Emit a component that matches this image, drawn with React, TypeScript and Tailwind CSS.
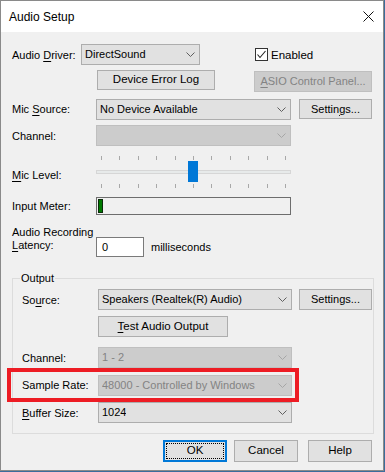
import type { ReactNode } from "react";

const font = { fontFamily: '"Liberation Sans", Arial, sans-serif' };

const Chevron = ({ disabled }: { disabled?: boolean }) => (
  <svg width="9" height="5" viewBox="0 0 9 5" className="shrink-0">
    <path
      d="M0.5 0.5 L4.5 4.5 L8.5 0.5"
      fill="none"
      stroke={disabled ? "#a6a6a6" : "#5f5f5f"}
      strokeWidth="1"
    />
  </svg>
);

const Combo = ({
  text,
  width,
  disabled,
}: {
  text?: string;
  width: string;
  disabled?: boolean;
}) => (
  <div
    className={`${width} h-[21px] flex items-center justify-between pl-[3px] pr-[4px] border ${
      disabled
        ? "bg-[#cccccc] border-[#bfbfbf] text-[#838383]"
        : "bg-[#e1e1e1] border-[#adadad] text-black"
    }`}
  >
    <span className="truncate">{text}</span>
    <Chevron disabled={disabled} />
  </div>
);

const Button = ({
  children,
  className = "",
  disabled,
}: {
  children: ReactNode;
  className?: string;
  disabled?: boolean;
}) => (
  <div
    className={`flex items-center justify-center border ${
      disabled
        ? "bg-[#cccccc] border-[#bfbfbf] text-[#838383]"
        : "bg-[#e1e1e1] border-[#adadad] text-black"
    } ${className}`}
  >
    {children}
  </div>
);

const Label = ({ children, className = "" }: { children: ReactNode; className?: string }) => (
  <div className={`leading-[14px] whitespace-nowrap ${className}`}>{children}</div>
);

const U = ({ children }: { children: ReactNode }) => (
  <span className="underline underline-offset-[2px]">{children}</span>
);

const Ticks = () => (
  <div className="h-[4px] flex justify-between px-[5px]">
    {Array.from({ length: 11 }).map((_, i) => (
      <div key={i} className="w-px h-[4px] bg-[#a8a8a8]" />
    ))}
  </div>
);

export default function App() {
  return (
    <div className="w-[385px] h-[472px] bg-[#3b6d9c] text-[11px] text-black" style={font}>
      <div className="w-[384px] h-[471px] border border-[#8a8a8a] flex flex-col bg-[#f0f0f0]">
        {/* title bar */}
        <div className="h-[31px] bg-white flex items-center justify-between pl-[8px] pr-[9px] shrink-0">
          <span className="text-[12px]">Audio Setup</span>
          <svg width="11" height="11" viewBox="0 0 11 11">
            <path d="M0.5 0.5 L10.5 10.5 M10.5 0.5 L0.5 10.5" stroke="#111" strokeWidth="1" />
          </svg>
        </div>

        <div className="flex flex-col pl-[11px]">
          {/* driver */}
          <div className="mt-[12px] h-[21px] flex items-center">
            <Label className="w-[69px]">
              Audio <U>D</U>river:
            </Label>
            <Combo text="DirectSound" width="w-[119px]" />
            <div className="ml-[55px] w-[13px] h-[13px] border border-[#333] bg-white flex items-center justify-center">
              <svg width="11" height="11" viewBox="0 0 11 11">
                <path d="M1.5 5.5 L4 8.5 L9.5 2" fill="none" stroke="#222" strokeWidth="1.1" />
              </svg>
            </div>
            <span className="ml-[3px] leading-[14px] text-[11.5px]">Enabled</span>
          </div>

          {/* buttons */}
          <div className="mt-[5px] h-[22px] flex items-start">
            <Button className="ml-[85px] w-[118px] h-[20px] text-[11.5px]">Device Error Log</Button>
            <Button disabled className="ml-[39px] mt-[1px] w-[118px] h-[21px]">
              <span>
                <U>A</U>SIO Control Panel...
              </span>
            </Button>
          </div>

          {/* mic source */}
          <div className="mt-[7px] h-[20px] flex items-center">
            <Label className="w-[84px]">
              Mic <U>S</U>ource:
            </Label>
            <Combo text="No Device Available" width="w-[195px]" />
            <Button className="ml-[8px] w-[73px] h-[20px]">
              <span>
                Settin<U>g</U>s...
              </span>
            </Button>
          </div>

          {/* channel */}
          <div className="mt-[6px] h-[21px] flex items-center">
            <Label className="w-[84px]">Channel:</Label>
            <Combo width="w-[195px]" disabled />
          </div>

          {/* mic level */}
          <div className="mt-[10px] h-[33px] flex items-start">
            <Label className="w-[84px] mt-[12px]">
              <U>M</U>ic Level:
            </Label>
            <div className="w-[195px] flex flex-col">
              <Ticks />
              <div className="relative h-[22px]">
                <div className="mt-[10px] h-[4px] border border-[#d6d6d6] bg-[#e7eaea]" />
                <div className="absolute left-[92px] top-[1px] w-[10px] h-[21px] bg-[#0078d7]" />
              </div>
              <div className="mt-[2px]">
                <Ticks />
              </div>
            </div>
          </div>

          {/* input meter */}
          <div className="mt-[8px] h-[18px] flex items-center">
            <Label className="w-[84px]">Input Meter:</Label>
            <div className="w-[195px] h-[18px] border border-[#6d6d6d] bg-[#f0f0f0] p-px">
              <div className="w-[5px] h-full bg-[#007a00] border border-[#0a2a0a]" />
            </div>
          </div>

          {/* latency */}
          <div className="mt-[11px] h-[31px] flex items-start">
            <div className="w-[84px] leading-[13px] whitespace-nowrap">
              <div>Audio Recording</div>
              <div>
                <U>L</U>atency:
              </div>
            </div>
            <div className="mt-[11px] w-[48px] h-[20px] border border-[#7a7a7a] bg-white flex items-center pl-[5px]">
              0
            </div>
            <span className="mt-[14px] ml-[7px] leading-[14px]">milliseconds</span>
          </div>

          {/* output group */}
          <fieldset className="mt-[14px] w-[362px] border border-[#dcdcdc]">
            <legend className="ml-[7px] px-px leading-[14px]">Output</legend>
            <div className="pl-[9px] pt-[4px] pb-[10px] flex flex-col">
              <div className="h-[21px] flex items-center">
                <Label className="w-[76px]">
                  So<U>u</U>rce:
                </Label>
                <Combo text="Speakers (Realtek(R) Audio)" width="w-[194px]" />
                <Button className="ml-[7px] w-[73px] h-[21px]">Settings...</Button>
              </div>
              <div className="mt-[6px] h-[21px] flex">
                <Button className="ml-[76px] w-[130px] h-[21px] text-[11.5px]">
                  <span>
                    <U>T</U>est Audio Output
                  </span>
                </Button>
              </div>
              <div className="mt-[10px] h-[21px] flex items-center">
                <Label className="w-[76px]">Channel:</Label>
                <Combo text="1 - 2" width="w-[194px]" disabled />
              </div>
              <div className="-ml-[15px] w-[292px] h-[34px] border-4 border-[#ed1c24] pl-[11px] flex items-center">
                <Label className="w-[76px]">Sample Rate:</Label>
                <Combo text="48000 - Controlled by Windows" width="w-[194px]" disabled />
              </div>
              <div className="h-[21px] flex items-center">
                <Label className="w-[76px]">
                  <U>B</U>uffer Size:
                </Label>
                <Combo text="1024" width="w-[194px]" />
              </div>
            </div>
          </fieldset>
        </div>

        {/* dialog buttons */}
        <div className="mt-[6px] h-[22px] flex justify-end pr-[11px]">
          <div className="w-[64px] h-[22px] border-2 border-[#0078d7] bg-[#e1e1e1] p-px">
            <div className="w-full h-full border border-dotted border-black flex items-center justify-center text-[11.5px]">
              OK
            </div>
          </div>
          <Button className="ml-[7px] w-[64px] h-[22px] text-[11.5px]">Cancel</Button>
          <Button className="ml-[10px] w-[64px] h-[22px] text-[11.5px]">Help</Button>
        </div>
      </div>
    </div>
  );
}
